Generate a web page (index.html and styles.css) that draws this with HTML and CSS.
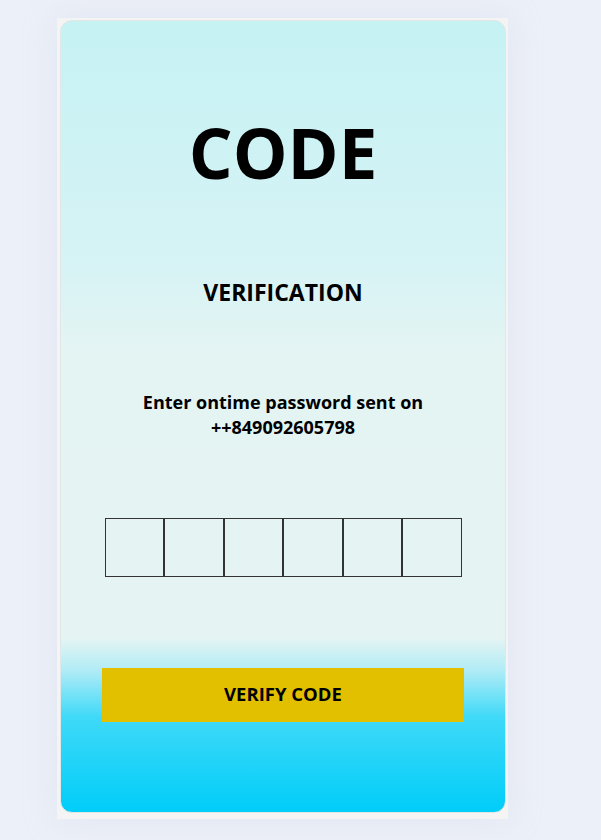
FILE: index.html
```html
<!DOCTYPE html>
<html>
<head>
<meta charset="utf-8">
<link rel="stylesheet" href="styles.css">
</head>
<body>
<div class="frame">
  <div class="card">
    <h1 class="title">CODE</h1>
    <h2 class="subtitle">VERIFICATION</h2>
    <p class="info">Enter ontime password sent on<br>++849092605798</p>
    <div class="otp">
      <input class="digit" type="text" maxlength="1">
      <input class="digit" type="text" maxlength="1">
      <input class="digit" type="text" maxlength="1">
      <input class="digit" type="text" maxlength="1">
      <input class="digit" type="text" maxlength="1">
      <input class="digit" type="text" maxlength="1">
    </div>
    <button class="verify">VERIFY CODE</button>
  </div>
</div>
</body>
</html>
```

FILE: styles.css
```css
html, body {
  margin: 0;
  padding: 0;
}
body {
  background: #ecf0f8;
  font-family: "Open Sans", "Noto Sans", sans-serif;
  width: 601px;
  height: 840px;
  overflow: hidden;
}
.frame {
  margin: 18px 0 0 57px;
  width: 446px;
  height: 795px;
  padding: 2px 2px 4px 3px;
  background: #f4f4f4;
  box-shadow: 0 0 30px rgba(200, 210, 230, 0.35);
}
.card {
  height: 793px;
  box-sizing: border-box;
  border-radius: 12px;
  border: 1px solid #e2e6e6;
  background: linear-gradient(180deg, #c6f2f4 0%, #d6f3f5 30%, #e4f4f3 42%, #e5f4f3 78%, #b2ecf6 82%, #3fd9f8 88%, #00cdf9 100%);
  display: flex;
  flex-direction: column;
  align-items: center;
}
.title {
  margin: 97px 0 0;
  font-size: 69px;
  font-weight: 700;
  line-height: 1;
  color: #000;
}
.subtitle {
  margin: 94px 0 0;
  font-size: 23px;
  font-weight: 700;
  line-height: 1;
  color: #000;
}
.info {
  margin: 86px 0 0;
  font-size: 18px;
  font-weight: 700;
  line-height: 25px;
  text-align: center;
  color: #000;
}
.otp {
  margin-top: 78px;
  display: flex;
}
.digit {
  width: 59.5px;
  height: 59px;
  box-sizing: border-box;
  border: 1px solid #333;
  background: transparent;
  padding: 0;
  margin: 0;
  outline: none;
}
.verify {
  margin-top: 91px;
  width: 362px;
  height: 54px;
  padding: 0 0 3px;
  border: none;
  background: #e2c000;
  font-family: "Open Sans", "Noto Sans", sans-serif;
  font-size: 18.5px;
  font-weight: 700;
  color: #000;
}
```
